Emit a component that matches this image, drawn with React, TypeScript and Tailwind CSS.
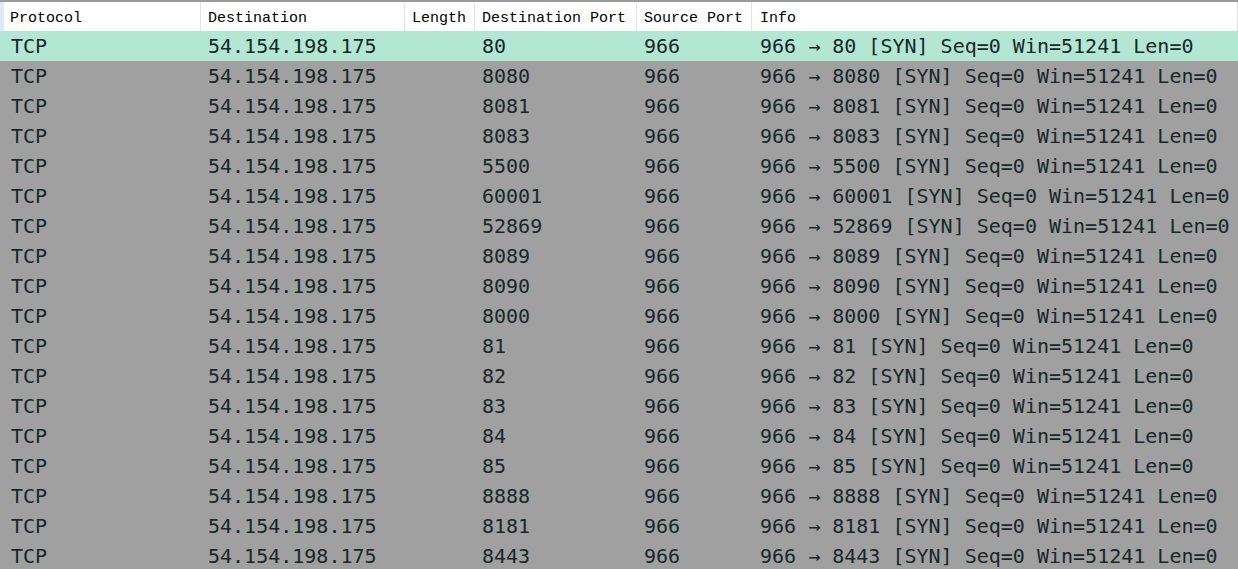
import React from "react";

const ports = ["80","8080","8081","8083","5500","60001","52869","8089","8090","8000","81","82","83","84","85","8888","8181","8443"];

const cols = [
  { label: "Protocol", w: "w-[201px]", pl: "pl-[6px]" },
  { label: "Destination", w: "w-[204px]", pl: "pl-[7px]" },
  { label: "Length", w: "w-[70px]", pl: "pl-[7px]" },
  { label: "Destination Port", w: "w-[162px]", pl: "pl-[7px]" },
  { label: "Source Port", w: "w-[115px]", pl: "pl-[7px]" },
  { label: "Info", w: "flex-1", pl: "pl-[8px]" },
];

export default function App() {
  return (
    <div className="w-[1238px] h-[569px] overflow-hidden bg-[#a0a0a0]">
      <div className="flex h-[31px] bg-white border-t-2 border-[#9a9a9a] font-['Liberation_Mono',monospace] text-[15px] text-black">
        {cols.map((c, i) => (
          <div
            key={c.label}
            className={`${c.w} ${c.pl} pt-[6px] flex items-center border-r border-[#e3e3e3] ${i === 0 ? "border-l-4 border-l-[#dfe9f5]" : ""}`}
          >
            {c.label}
          </div>
        ))}
      </div>
      <div className="font-['DejaVu_Sans_Mono',monospace] text-[20px] text-[#17282a]">
        {ports.map((p, i) => (
          <div key={i} className={`flex h-[30px] items-center ${i === 0 ? "bg-[#b4e7d3]" : ""}`}>
            <div className="w-[201px] pl-[11px]">TCP</div>
            <div className="w-[204px] pl-[7px]">54.154.198.175</div>
            <div className="w-[70px]"></div>
            <div className="w-[162px] pl-[7px]">{p}</div>
            <div className="w-[115px] pl-[7px]">966</div>
            <div className="flex-1 pl-[8px] whitespace-pre">{`966 → ${p} [SYN] Seq=0 Win=51241 Len=0`}</div>
          </div>
        ))}
      </div>
    </div>
  );
}
